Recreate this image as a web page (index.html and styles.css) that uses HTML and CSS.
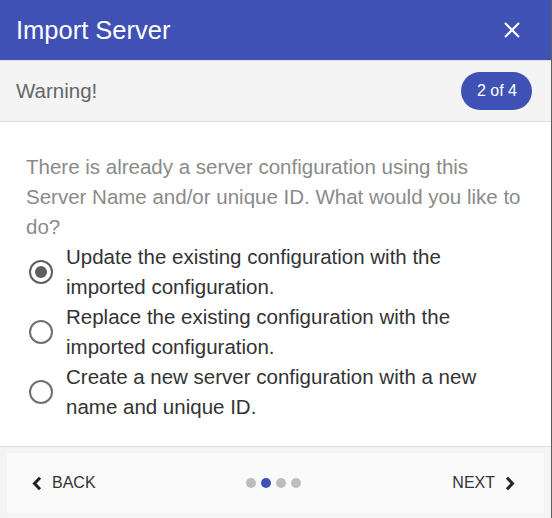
FILE: index.html
```html
<!DOCTYPE html>
<html lang="en">
<head>
    <meta charset="UTF-8">
    <meta name="viewport" content="width=device-width, initial-scale=1.0">
    <title>Import Server</title>
    <link rel="stylesheet" href="styles.css">
</head>
<body>
    <div class="dialog">
        <div class="dialog-header">
            <h2>Import Server</h2>
            <button class="close-button" type="button" aria-label="Close">
                <svg width="16" height="16" viewBox="0 0 16 16">
                    <path d="M1 1 L15 15 M15 1 L1 15" stroke="#fff" stroke-width="2.2" fill="none"/>
                </svg>
            </button>
        </div>

        <div class="warning-bar">
            <span class="warning-title">Warning!</span>
            <span class="step-badge">2 of 4</span>
        </div>

        <div class="dialog-content">
            <p class="message">There is already a server configuration using this Server Name and/or unique ID. What would you like to do?</p>

            <label class="option">
                <input type="radio" name="import-action" value="update" checked>
                <span class="radio-mark"></span>
                <span class="option-text">Update the existing configuration with the imported configuration.</span>
            </label>
            <label class="option">
                <input type="radio" name="import-action" value="replace">
                <span class="radio-mark"></span>
                <span class="option-text">Replace the existing configuration with the imported configuration.</span>
            </label>
            <label class="option">
                <input type="radio" name="import-action" value="create">
                <span class="radio-mark"></span>
                <span class="option-text">Create a new server configuration with a new name and unique ID.</span>
            </label>
        </div>

        <div class="dialog-footer">
            <div class="stepper">
                <button class="step-button" type="button">
                    <svg width="10" height="15" viewBox="0 0 10 15">
                        <path d="M8 1.8 L2.5 7.5 L8 13.2" stroke="#222" stroke-width="3" fill="none"/>
                    </svg>
                    <span>BACK</span>
                </button>
                <div class="dots">
                    <span class="dot"></span>
                    <span class="dot active"></span>
                    <span class="dot"></span>
                    <span class="dot"></span>
                </div>
                <button class="step-button" type="button">
                    <span>NEXT</span>
                    <svg width="10" height="15" viewBox="0 0 10 15">
                        <path d="M2 1.8 L7.5 7.5 L2 13.2" stroke="#222" stroke-width="3" fill="none"/>
                    </svg>
                </button>
            </div>
        </div>
    </div>
</body>
</html>
```

FILE: styles.css
```css
body {
    font-family: "Liberation Sans", Arial, sans-serif;
    background-color: #5c5c5c;
    margin: 0;
    padding: 0;
}
.dialog {
    width: 551px;
    height: 518px;
    background-color: #fff;
    display: flex;
    flex-direction: column;
}
.dialog-header {
    height: 60px;
    background-color: #3f51b5;
    display: flex;
    align-items: center;
    justify-content: space-between;
    padding: 0 31px 0 16px;
    flex-shrink: 0;
}
.dialog-header h2 {
    margin: 0;
    color: #fff;
    font-size: 25.5px;
    font-weight: normal;
}
.close-button {
    background: none;
    border: none;
    padding: 0;
    width: 16px;
    height: 16px;
    cursor: pointer;
    display: flex;
}
.warning-bar {
    height: 60px;
    background-color: #f4f4f4;
    border-top: 1px solid #dedede;
    border-bottom: 1px solid #dedede;
    display: flex;
    align-items: center;
    justify-content: space-between;
    padding: 0 19px 0 16px;
    flex-shrink: 0;
}
.warning-title {
    font-size: 20.5px;
    color: #666;
}
.step-badge {
    background-color: #3f51b5;
    color: #fff;
    font-size: 16px;
    line-height: 38px;
    padding: 0 15px 0 16px;
    border-radius: 19px;
}
.dialog-content {
    flex: 1;
    padding: 30px 29px 0 26px;
}
.message {
    margin: 0;
    font-size: 20.5px;
    line-height: 30px;
    color: #8a8a8a;
}
.option {
    display: flex;
    align-items: center;
    gap: 13px;
    cursor: pointer;
}
.option input {
    display: none;
}
.radio-mark {
    width: 20px;
    height: 20px;
    margin-left: 3px;
    border: 2px solid #707070;
    border-radius: 50%;
    flex-shrink: 0;
    display: flex;
    align-items: center;
    justify-content: center;
}
.option input:checked + .radio-mark {
    border-color: #5f5f5f;
}
.option input:checked + .radio-mark::after {
    content: "";
    width: 12px;
    height: 12px;
    border-radius: 50%;
    background-color: #5f5f5f;
}
.option-text {
    font-size: 20.5px;
    line-height: 30px;
    color: #333;
}
.dialog-footer {
    background-color: #f4f4f4;
    border-top: 1px solid #dedede;
    padding: 6px 7px 5px 7px;
    flex-shrink: 0;
}
.stepper {
    height: 60px;
    background-color: #fafafa;
    display: flex;
    align-items: center;
    justify-content: space-between;
    padding: 0 29px 0 25px;
}
.step-button {
    background: none;
    border: none;
    padding: 0;
    font-family: inherit;
    font-size: 16px;
    color: #333;
    display: flex;
    align-items: center;
    gap: 10px;
    cursor: pointer;
}
.dots {
    display: flex;
    gap: 5px;
}
.dot {
    width: 10px;
    height: 10px;
    border-radius: 50%;
    background-color: #bdbdbd;
}
.dot.active {
    background-color: #3f51b5;
}
```
